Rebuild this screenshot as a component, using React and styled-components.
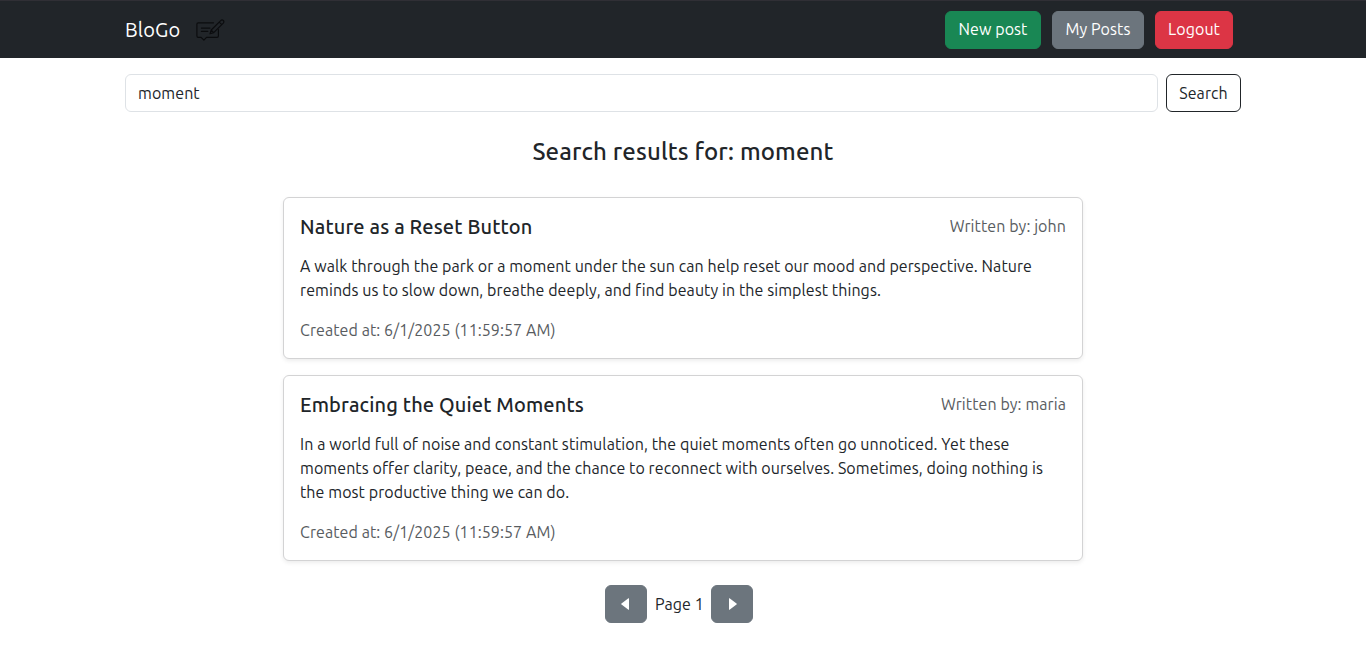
import React from 'react';
import styled, { createGlobalStyle, css } from 'styled-components';

const GlobalStyle = createGlobalStyle`
  *, *::before, *::after { box-sizing: border-box; }
  body {
    margin: 0;
    background: #fff;
    color: #212529;
    font-family: Ubuntu, "Noto Sans", "Open Sans", sans-serif;
    font-size: 16px;
    line-height: 1.5;
    letter-spacing: 0.08px;
  }
`;

const Navbar = styled.header`
  height: 58px;
  padding: 1px 125px 0;
  background: #212529;
  border-top: 1px solid #302f35;
  display: flex;
  align-items: center;
  justify-content: space-between;
`;

const Brand = styled.a`
  display: flex;
  align-items: center;
  gap: 15px;
  color: #fff;
  font-size: 20px;
  line-height: 30px;
  text-decoration: none;
`;

const BrandName = styled.span`
  width: 56px;
  letter-spacing: 0.15px;
  white-space: nowrap;
`;

const NavActions = styled.nav`
  display: flex;
  gap: 11.4px;
  margin-right: 8px;
`;

const variants = {
  success: css`background: #198754; border-color: #198754; color: #fff;`,
  secondary: css`background: #6c757d; border-color: #6c757d; color: #fff;`,
  danger: css`background: #dc3545; border-color: #dc3545; color: #fff;`,
  outline: css`background: #fff; border-color: #212529; color: #212529;`,
};

const Button = styled.button`
  display: flex;
  align-items: center;
  justify-content: center;
  flex: none;
  width: ${({ $width }) => $width}px;
  height: 38px;
  padding: 0;
  border: 1px solid;
  border-radius: 6px;
  font: inherit;
  letter-spacing: inherit;
  white-space: nowrap;
  ${({ $variant }) => variants[$variant]}
`;

const NavButton = styled(Button)`
  padding-bottom: 2px;
`;

const SearchForm = styled.form`
  display: flex;
  gap: 8px;
  padding: 16px 125px 0;
`;

const SearchInput = styled.input`
  flex: 1;
  min-width: 0;
  height: 38px;
  padding: 6px 12px;
  border: 1px solid #dee2e6;
  border-radius: 6px;
  background: #fff;
  color: #212529;
  font: inherit;
  letter-spacing: inherit;
  outline: none;
`;

const Results = styled.main`
  width: 800px;
  margin: 25px auto 0;
`;

const Heading = styled.h1`
  margin: 0 0 31px;
  font-size: 24px;
  font-weight: 500;
  line-height: 29px;
  letter-spacing: 0.15px;
  text-align: center;
`;

const PostList = styled.div`
  display: flex;
  flex-direction: column;
  gap: 16px;
`;

const Card = styled.article`
  padding: 16px;
  border: 1px solid #d3d3d4;
  border-radius: 6px;
  background: #fff;
  box-shadow: 0 2px 4px rgba(0, 0, 0, 0.075);
`;

const CardHeader = styled.div`
  display: flex;
  justify-content: space-between;
  height: 24px;
`;

const CardTitle = styled.h2`
  margin: 0;
  font-size: 20px;
  font-weight: 500;
  line-height: 26px;
  letter-spacing: 0.14px;
`;

const Muted = styled.span`
  color: #585c5f;
`;

const CardText = styled.p`
  margin: 16px 0;
`;

const Pagination = styled.div`
  display: flex;
  align-items: center;
  justify-content: center;
  gap: 8px;
  margin: 24px 8px 0 0;
`;

const PageLabel = styled.span`
  width: 48px;
  white-space: nowrap;
`;

const posts = [
  {
    title: 'Nature as a Reset Button',
    author: 'john',
    text: 'A walk through the park or a moment under the sun can help reset our mood and perspective. Nature reminds us to slow down, breathe deeply, and find beauty in the simplest things.',
  },
  {
    title: 'Embracing the Quiet Moments',
    author: 'maria',
    text: 'In a world full of noise and constant stimulation, the quiet moments often go unnoticed. Yet these moments offer clarity, peace, and the chance to reconnect with ourselves. Sometimes, doing nothing is the most productive thing we can do.',
  },
];

const NoteIcon = () => (
  <svg width="29" height="24" viewBox="0 0 29 24" fill="none" stroke="#0b0c0e" strokeWidth="1.15" strokeLinejoin="round" strokeLinecap="round">
    <path d="M17.5 4.8H2.2Q.9 4.8.9 6.1V18Q.9 19.3 2.2 19.3H5.1L7.9 22.2L10.5 19.3H21Q22.4 19.3 22.4 18V11.5" />
    <path d="M5.4 10.1H14M5.4 13.4H11.8" />
    <path d="M14 15.8L15.2 12L24.7 2.6Q26 1.4 27.3 2.5Q28.5 3.8 27.3 5.1L17.7 14.6ZM23.2 4.1L25.8 6.6M15.2 12L17.7 14.6" />
  </svg>
);

const ArrowIcon = styled.svg`
  margin-right: ${({ $nudge }) => $nudge}px;
`;

const arrowPaths = {
  left: 'M8 1.2V12.8Q7.6 13 7.1 12.6L.5 7.6Q-.2 7 .5 6.4L7.1 1.4Q7.6 1 8 1.2Z',
  right: 'M0 1.2V12.8Q.4 13 .9 12.6L7.5 7.6Q8.2 7 7.5 6.4L.9 1.4Q.4 1 0 1.2Z',
};

const Arrow = ({ direction }) => (
  <ArrowIcon $nudge={direction === 'left' ? 2 : -2} width="8" height="14" viewBox="0 0 8 14" fill="#fff">
    <path d={arrowPaths[direction]} />
  </ArrowIcon>
);

export default function App() {
  return (
    <>
      <GlobalStyle />
      <Navbar>
        <Brand>
          <BrandName>BloGo</BrandName>
          <NoteIcon />
        </Brand>
        <NavActions>
          <NavButton $variant="success" $width={96}>New post</NavButton>
          <NavButton $variant="secondary" $width={91.2}>My Posts</NavButton>
          <NavButton $variant="danger" $width={78}>Logout</NavButton>
        </NavActions>
      </Navbar>
      <SearchForm onSubmit={(e) => e.preventDefault()}>
        <SearchInput defaultValue="moment" />
        <Button $variant="outline" $width={75}>Search</Button>
      </SearchForm>
      <Results>
        <Heading>Search results for: moment</Heading>
        <PostList>
          {posts.map(({ title, author, text }) => (
            <Card key={title}>
              <CardHeader>
                <CardTitle>{title}</CardTitle>
                <Muted>Written by: {author}</Muted>
              </CardHeader>
              <CardText>{text}</CardText>
              <Muted>Created at: 6/1/2025 (11:59:57 AM)</Muted>
            </Card>
          ))}
        </PostList>
        <Pagination>
          <Button $variant="secondary" $width={42} aria-label="Previous page"><Arrow direction="left" /></Button>
          <PageLabel>Page 1</PageLabel>
          <Button $variant="secondary" $width={42} aria-label="Next page"><Arrow direction="right" /></Button>
        </Pagination>
      </Results>
    </>
  );
}
